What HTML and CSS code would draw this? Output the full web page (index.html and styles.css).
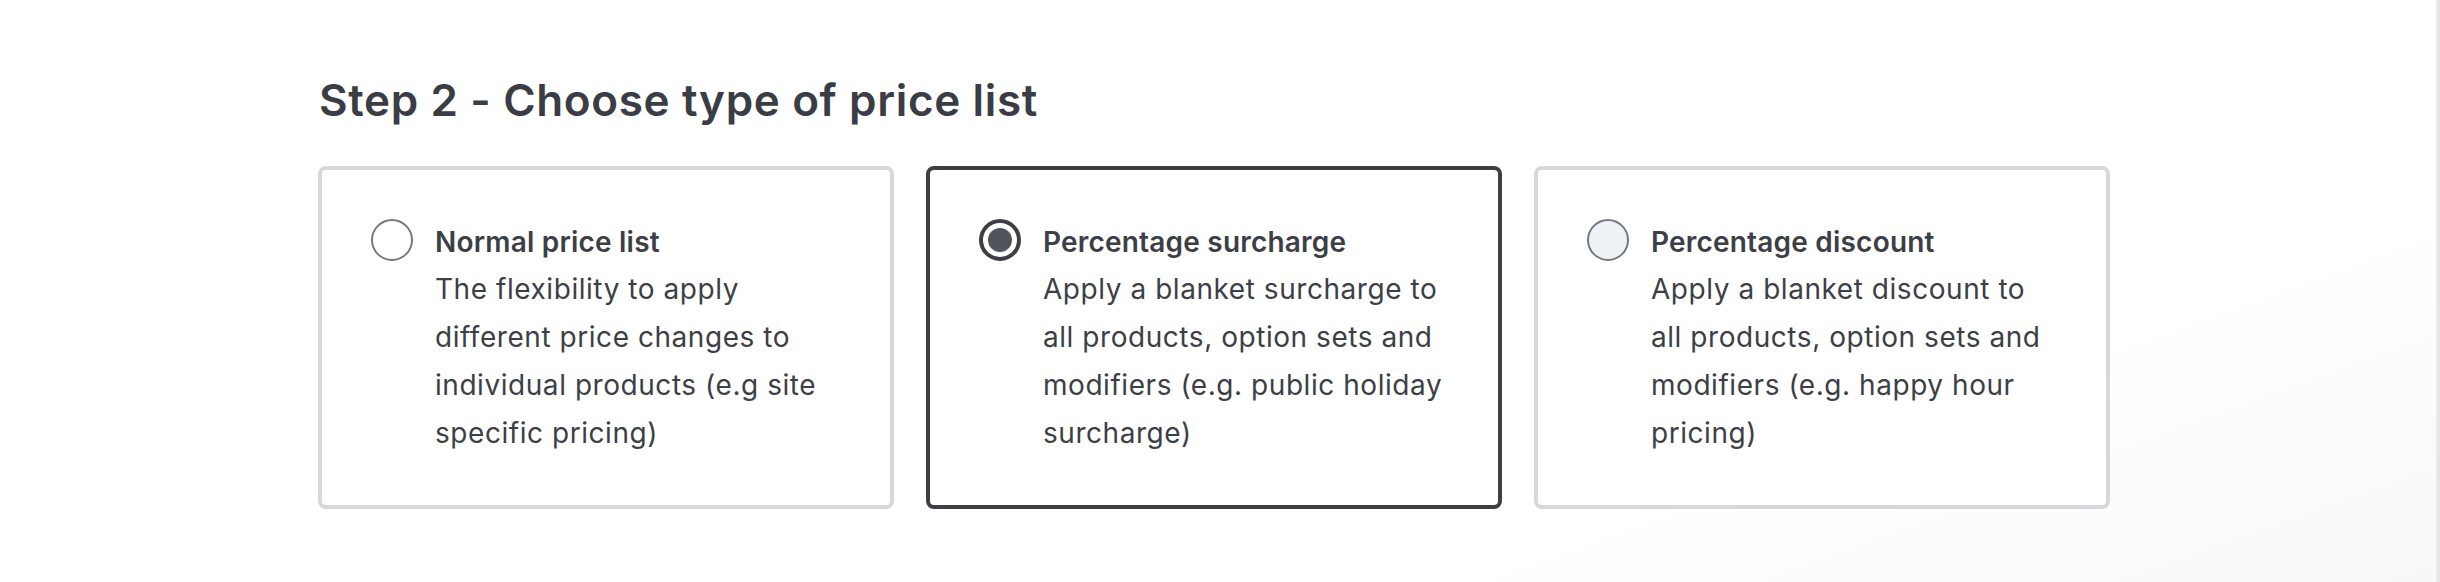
FILE: index.html
```html
<!DOCTYPE html>
<html lang="en">
<head>
<meta charset="utf-8">
<title>Choose type of price list</title>
<link rel="stylesheet" href="styles.css">
</head>
<body>
<div class="page">
  <main class="content">
    <h2 class="step-title">Step 2 - Choose type of price list</h2>
    <div class="options">
      <label class="option">
        <span class="radio"></span>
        <span class="option-text">
          <span class="option-title">Normal price list</span>
          <span class="option-desc">The flexibility to apply different price changes to individual products (e.g site specific pricing)</span>
        </span>
      </label>
      <label class="option option--selected">
        <span class="radio radio--checked"></span>
        <span class="option-text">
          <span class="option-title">Percentage surcharge</span>
          <span class="option-desc">Apply a blanket surcharge to all products, option sets and modifiers (e.g. public holiday surcharge)</span>
        </span>
      </label>
      <label class="option">
        <span class="radio radio--hover"></span>
        <span class="option-text">
          <span class="option-title">Percentage discount</span>
          <span class="option-desc">Apply a blanket discount to all products, option sets and modifiers (e.g. happy hour pricing)</span>
        </span>
      </label>
    </div>
  </main>
  <div class="edge"></div>
</div>
</body>
</html>
```

FILE: styles.css
```css
* { box-sizing: border-box; }
html, body {
  margin: 0;
  padding: 0;
  background: #ffffff;
}
body {
  font-family: Inter, Roboto, "Liberation Sans", sans-serif;
  color: #3c3f46;
}
.page {
  display: flex;
  width: 2440px;
  height: 582px;
  overflow: hidden;
}
.content {
  flex: 1;
  padding: 71px 0 0 318px;
  background: linear-gradient(160deg, #ffffff 75%, #f8f8f8 100%);
}
.edge {
  width: 4px;
  background: #e6e6e6;
  border-left: 1px solid #f0f0f0;
}
.step-title {
  margin: 0 0 37px 1px;
  font-size: 44px;
  line-height: 58px;
  font-weight: 600;
  color: #3a3d44;
  letter-spacing: 0.65px;
}
.options {
  display: grid;
  grid-template-columns: repeat(3, 576px);
  column-gap: 32px;
}
.option {
  display: flex;
  align-items: flex-start;
  gap: 22px;
  border: 4px solid #d4d9dd;
  border-radius: 8px;
  padding: 48px 20px 46px 49px;
  background: #ffffff;
  height: 343px;
}
.option--selected {
  border-color: #3c3f46;
}
.radio {
  flex: 0 0 42px;
  width: 42px;
  height: 42px;
  margin-top: 1px;
  border-radius: 50%;
  border: 2px solid #737a82;
  background: #ffffff;
  position: relative;
}
.radio--hover {
  background: #eff2f5;
}
.radio--checked {
  border: 4px solid #3c3f46;
}
.radio--checked::after {
  content: "";
  position: absolute;
  left: 5px;
  top: 5px;
  width: 24px;
  height: 24px;
  border-radius: 50%;
  background: #50555c;
}
.option-text {
  display: flex;
  flex-direction: column;
  width: 410px;
  font-size: 28px;
  line-height: 48px;
}
.option-title {
  font-weight: 600;
  color: #3c3f46;
  margin-bottom: -1px;
  letter-spacing: 0.2px;
}
.option-desc {
  font-weight: 400;
  color: #3c3f46;
  letter-spacing: 0.55px;
}
```
